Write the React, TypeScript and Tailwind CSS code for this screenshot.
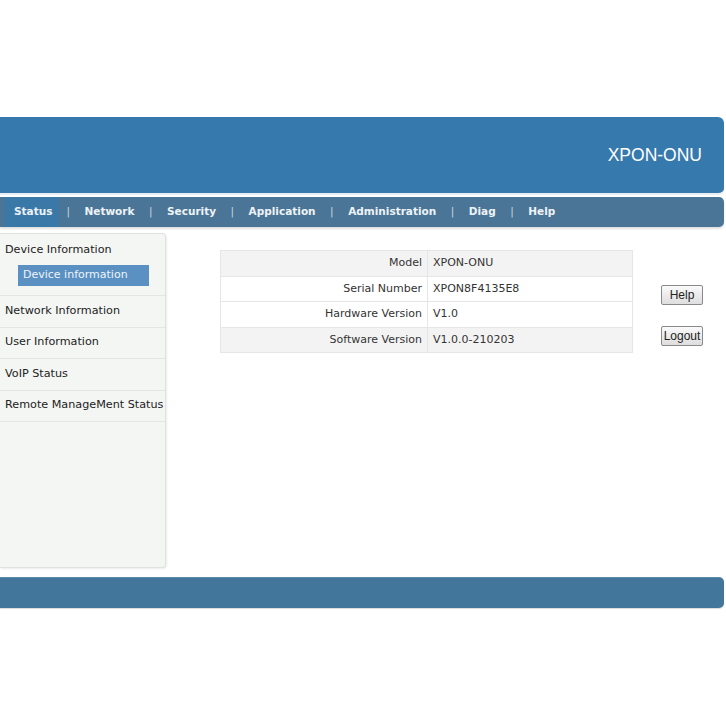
import React from 'react';

const navItems = ['Status', 'Network', 'Security', 'Application', 'Administration', 'Diag', 'Help'];

const sideItems = ['Network Information', 'User Information', 'VoIP Status', 'Remote ManageMent Status'];

const rows = [
  { label: 'Model', value: 'XPON-ONU', shade: true },
  { label: 'Serial Number', value: 'XPON8F4135E8', shade: false },
  { label: 'Hardware Version', value: 'V1.0', shade: false },
  { label: 'Software Version', value: 'V1.0.0-210203', shade: true },
];

export default function App() {
  return (
    <div className="w-[726px] h-[726px] bg-white overflow-hidden font-['DejaVu_Sans',sans-serif]">
      <div className="pt-[117px] w-[724px]">
        {/* Banner */}
        <div className="h-[78px] bg-[#3579ad] rounded-r-[6px] border-b-2 border-[#e8eef3] flex items-center justify-end pr-[22px]">
          <span className="text-white text-[17.5px] font-['Liberation_Sans',sans-serif]">XPON-ONU</span>
        </div>

        {/* Menu bar */}
        <div className="mt-[2px] h-[30px] bg-[#4a7596] rounded-r-[5px] flex items-center pl-[5px] shadow-[0_2px_2px_rgba(0,0,0,0.12)]">
          {navItems.map((item, i) => (
            <React.Fragment key={item}>
              {i > 0 && (
                <span className={`text-[#c9d6e0] text-[10.5px] pr-[14.5px] ${i === 1 ? 'pl-[7px]' : 'pl-[14.5px]'}`}>|</span>
              )}
              <span
                className={`h-full flex items-center text-[10.5px] font-bold text-[#eef3f7] ${
                  i === 0 ? 'bg-[#3a78a8] pl-[9px] pr-[7px]' : ''
                }`}
              >
                {item}
              </span>
            </React.Fragment>
          ))}
        </div>

        <div className="flex mt-[6px]">
          {/* Left menu */}
          <div className="w-[166px] h-[335px] bg-[#f4f6f4] border border-l-0 border-[#dfe2df] rounded-r-[4px] shadow-[1px_1px_2px_rgba(0,0,0,0.08)] flex flex-col text-[11.2px] text-[#222]">
            <div className="pt-[7px] pb-[9px] border-b border-[#e3e6e3]">
              <div className="pl-[5px] leading-[18px]">Device Information</div>
              <div className="ml-[18px] mt-[6px] w-[131px] h-[21px] bg-[#5b90c2] text-[#eef4fa] flex items-center pl-[5px] text-[11px]">
                Device information
              </div>
            </div>
            {sideItems.map((item) => (
              <div key={item} className="h-[31.5px] pl-[5px] flex items-center border-b border-[#e3e6e3] whitespace-nowrap">
                {item}
              </div>
            ))}
          </div>

          {/* Content */}
          <div className="ml-[54px] mt-[17px]">
            <table className="w-[413px] border-collapse text-[11px] text-[#333]">
              <tbody>
                {rows.map((r) => (
                  <tr key={r.label} className={`h-[25.5px] ${r.shade ? 'bg-[#f3f3f3]' : 'bg-white'}`}>
                    <td className="w-[207px] text-right pr-[5px] border border-[#e6e6e6]">{r.label}</td>
                    <td className="pl-[5px] border border-[#e6e6e6]">{r.value}</td>
                  </tr>
                ))}
              </tbody>
            </table>
          </div>

          <div className="ml-[28px] mt-[52px] flex flex-col gap-[21px] font-['Liberation_Sans',sans-serif] text-[12px] text-[#222]">
            <button className="w-[42px] h-[20px] border border-[#8a8a8a] rounded-[2px] bg-gradient-to-b from-[#fafafa] to-[#dedede] flex items-center justify-center">
              Help
            </button>
            <button className="w-[42px] h-[20px] border border-[#8a8a8a] rounded-[2px] bg-gradient-to-b from-[#fafafa] to-[#dedede] flex items-center justify-center">
              Logout
            </button>
          </div>
        </div>

        {/* Footer bar */}
        <div className="mt-[9px] h-[31px] bg-[#42769b] border-t border-[#5b89a8] rounded-r-[5px] shadow-[0_1px_1px_rgba(0,0,0,0.15)]" />
      </div>
    </div>
  );
}
